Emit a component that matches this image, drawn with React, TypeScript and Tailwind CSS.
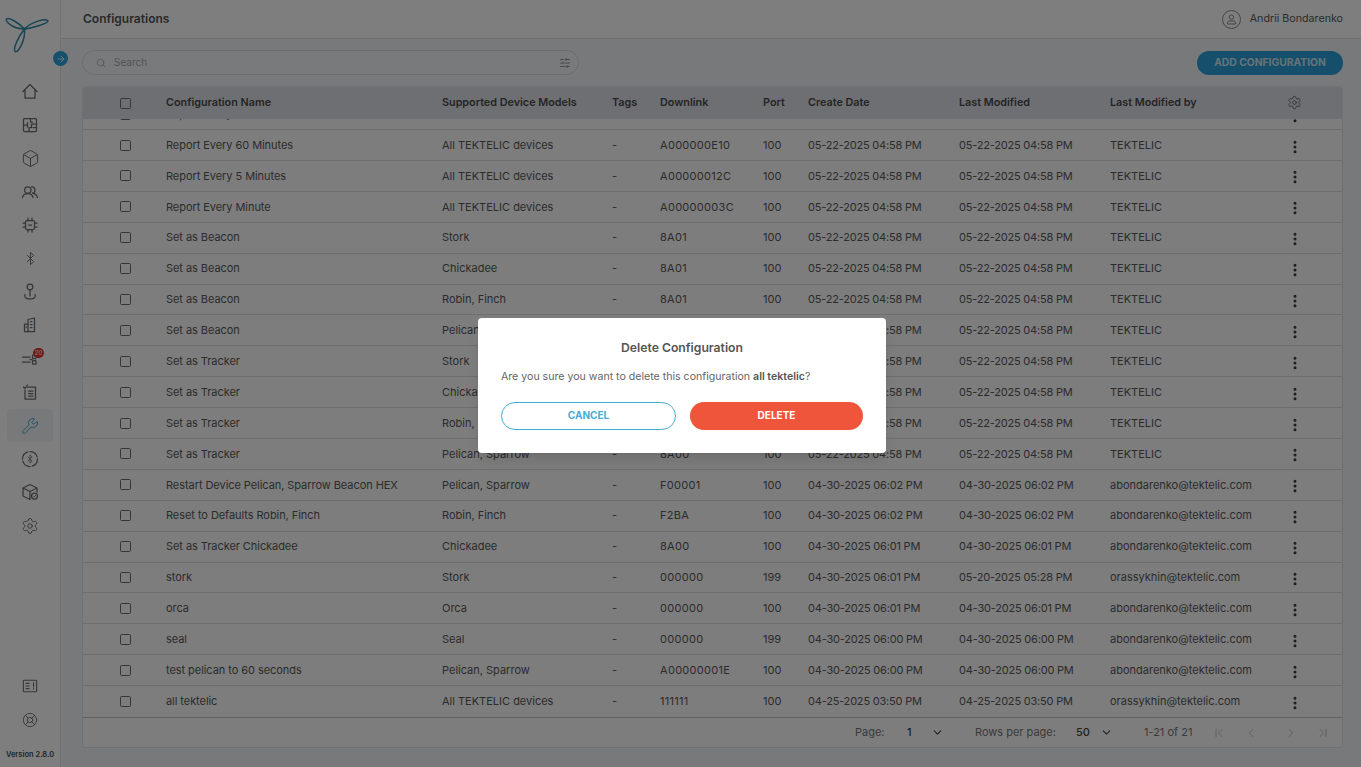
import React from "react";
import { Bluetooth, Box, ChevronDown, ChevronLeft, ChevronRight, ChevronFirst, ChevronLast, EllipsisVertical, LifeBuoy, Search, Settings, SlidersHorizontal, Wrench, ArrowRight } from "lucide-react";

const A = "All TEKTELIC devices";
const D1 = "05-22-2025 04:58 PM";
const T = "TEKTELIC";
const AB = "abondarenko@tektelic.com";
const OR = "orassykhin@tektelic.com";
const rows: string[][] = [
  ["Report Every 30 Minutes", A, "A000000708", "100", D1, D1, T],
  ["Report Every 60 Minutes", A, "A000000E10", "100", D1, D1, T],
  ["Report Every 5 Minutes", A, "A00000012C", "100", D1, D1, T],
  ["Report Every Minute", A, "A00000003C", "100", D1, D1, T],
  ["Set as Beacon", "Stork", "8A01", "100", D1, D1, T],
  ["Set as Beacon", "Chickadee", "8A01", "100", D1, D1, T],
  ["Set as Beacon", "Robin, Finch", "8A01", "100", D1, D1, T],
  ["Set as Beacon", "Pelican, Sparrow", "8A01", "100", D1, D1, T],
  ["Set as Tracker", "Stork", "8A00", "100", D1, D1, T],
  ["Set as Tracker", "Chickadee", "8A00", "100", D1, D1, T],
  ["Set as Tracker", "Robin, Finch", "8A00", "100", D1, D1, T],
  ["Set as Tracker", "Pelican, Sparrow", "8A00", "100", D1, D1, T],
  ["Restart Device Pelican, Sparrow Beacon HEX", "Pelican, Sparrow", "F00001", "100", "04-30-2025 06:02 PM", "04-30-2025 06:02 PM", AB],
  ["Reset to Defaults Robin, Finch", "Robin, Finch", "F2BA", "100", "04-30-2025 06:02 PM", "04-30-2025 06:02 PM", AB],
  ["Set as Tracker Chickadee", "Chickadee", "8A00", "100", "04-30-2025 06:01 PM", "04-30-2025 06:01 PM", AB],
  ["stork", "Stork", "000000", "199", "04-30-2025 06:01 PM", "05-20-2025 05:28 PM", OR],
  ["orca", "Orca", "000000", "100", "04-30-2025 06:01 PM", "04-30-2025 06:01 PM", AB],
  ["seal", "Seal", "000000", "199", "04-30-2025 06:00 PM", "04-30-2025 06:00 PM", AB],
  ["test pelican to 60 seconds", "Pelican, Sparrow", "A00000001E", "100", "04-30-2025 06:00 PM", "04-30-2025 06:00 PM", AB],
  ["all tektelic", A, "111111", "100", "04-25-2025 03:50 PM", "04-25-2025 03:50 PM", OR],
];

const grid = "grid grid-cols-[83px_276px_170px_48px_103px_45px_151px_151px_1fr] items-center";
const ic = { size: 18, strokeWidth: 1.25 };

function Ico({ size = 18, children }: { size?: number; children: React.ReactNode }) {
  return (
    <svg width={size} height={size} viewBox="0 0 18 18" fill="none" stroke="currentColor" strokeWidth="1.25" strokeLinejoin="round" strokeLinecap="round">
      {children}
    </svg>
  );
}
const HomeI = () => <Ico><path d="M2 8.500L9 1.500L16 8.500M4 7V15H14V7" /></Ico>;
const FloorPlan = () => <Ico><rect x="2.500" y="2.500" width="13" height="13" rx="1" /><path d="M2.500 9H6.500M6.500 6.500V11M9.500 2.500V6H11.500M15.500 8H10.500V11.500H8V15.500M12 11.500H15.500" /></Ico>;
const UsersI = () => <Ico><circle cx="6.800" cy="7" r="3.200" /><path d="M1.500 14.500C2 11.800 4 10.600 6.800 10.600S11.500 11.800 12 14.500" /><path d="M10.500 3.900A3.200 3.200 0 0 1 11.500 10.200C14 10.600 15.800 12 16.500 14.500" /></Ico>;
const Chip = () => <Ico><rect x="4.500" y="4.500" width="9" height="9" rx="1.500" /><path d="M7.500 9H10.500M7 2V4.500M11 2V4.500M7 13.500V16M11 13.500V16M2 7H4.500M2 11H4.500M13.500 7H16M13.500 11H16" /></Ico>;
const Pin = () => <Ico><circle cx="9" cy="4" r="2.800" /><path d="M9 6.800V13M4 11.500C2.600 14 5 16 9 16S15.400 14 14 11.500" /></Ico>;
const Tower = () => <Ico><path d="M7 15.500V3.500L13.500 2V15.500Z" /><path d="M7 8H3.500V15.500H7M9.500 5.500H11M9.500 8.500H11M9.500 11.500H11M5 11H5.500" /></Ico>;
const Doc = () => <Ico><path d="M6.500 4H14.500V16H4V7" /><path d="M2.500 4L4 5.500L6.500 2M7.500 8H12M7.500 10.500H12M7.500 13H12" /></Ico>;
function Rules() {
  return (
    <span className="relative flex h-[18px] w-[18px] items-center justify-center">
      <Ico><path d="M1.500 7H9M1.500 12H9M9 9.500H11" /><rect x="11.500" y="5" width="3.500" height="3.500" rx=".6" /><rect x="11.500" y="10.500" width="3.500" height="3.500" rx=".6" /></Ico>
      <span className="absolute -right-[5px] -top-[2px] flex h-[10px] w-[11px] items-center justify-center rounded-full bg-[#e3342f] text-[6px] leading-none text-white">20</span>
    </span>
  );
}
function BleCircle() {
  return (
    <span className="relative flex h-[18px] w-[18px] items-center justify-center">
      <span className="absolute inset-0">
        <Ico><circle cx="9" cy="9" r="7.500" strokeDasharray="9.500 2.200" /></Ico>
      </span>
      <Bluetooth size={10} strokeWidth={1.8} />
    </span>
  );
}
const BoxCheck = () => <Ico><path d="M9 1.500L16 5V9M9 1.500L2 5V13L9 16.500M2 5L9 8.500L16 5M9 8.500V16.500" /><circle cx="13.500" cy="13" r="3" /><path d="M12.300 13L13.200 13.900L14.800 12.300" strokeWidth=".9" /></Ico>;
const Panel = () => <Ico size={16}><rect x="1.500" y="2.500" width="15" height="13" rx="1" /><path d="M4.500 6H8M4.500 9H8M4.500 12H8M13 5.500V10M13 12V12.500" /></Ico>;

function Logo() {
  return (
    <svg width="44" height="38" viewBox="0 0 44 38" fill="none" stroke="#2f8aa3" strokeWidth="1.500" className="block">
      <path d="M19.500 13C14 7 4 1 1.500 3 -.5 6 10 13.500 19.500 13Z" />
      <path d="M19.500 13C27 12 42 8 43 5 42 2 27 5 19.500 13Z" />
      <path d="M19.500 13C13 21 8 33 10 35.500 13.500 37 20.500 24 19.500 13Z" />
    </svg>
  );
}

const navTop: [React.ReactNode, boolean?][] = [
  [<HomeI />], [<FloorPlan />], [<Box size={19} strokeWidth={1.25} />], [<UsersI />], [<Chip />],
  [<Bluetooth size={15} strokeWidth={1.5} />], [<Pin />], [<Tower />], [<Rules />],
  [<Doc />], [<Wrench {...ic} />, true], [<BleCircle />], [<BoxCheck />], [<Settings {...ic} />],
];

function Check() {
  return <span className="block h-[11px] w-[11px] rounded-[1.5px] border-[1.5px] border-[#6a6a6a]" />;
}

export default function App() {
  return (
    <div className="relative flex h-[767px] w-[1361px] overflow-hidden bg-[#eef2f5] font-[Inter,'Liberation_Sans',sans-serif] text-[11px] text-[#585858]">
      <aside className="relative flex w-[61px] shrink-0 flex-col items-stretch border-r border-[#dfe2e5] bg-[#fcfdfe]">
        <div className="ml-[5px] pt-[16px]"><Logo /></div>
        <div className="absolute right-[-8px] top-[51px] flex h-[15px] w-[15px] items-center justify-center rounded-full bg-[#2ba0da] text-white">
          <ArrowRight size={10} strokeWidth={2} />
        </div>
        <nav className="mt-[21px] flex flex-col text-[#686c70]">
          {navTop.map(([icon, active], i) => (
            <div key={i} className={`mx-[7px] flex h-[33.4px] items-center justify-center rounded-[4px] ${active ? "bg-[#f0f2f4] text-[#3f9fcb]" : ""}`}>
              {icon}
            </div>
          ))}
        </nav>
        <div className="mt-auto flex flex-col items-center text-[#686c70]">
          <div className="flex h-[34px] items-center"><Panel /></div>
          <div className="flex h-[34px] items-center"><LifeBuoy size={16} strokeWidth={1.3} /></div>
          <div className="mb-[7px] mt-[13px] text-[7.500px] font-semibold leading-[10px] text-[#4a4a4a]">Version 2.8.0</div>
        </div>
      </aside>

      <main className="flex min-w-0 flex-1 flex-col">
        <header className="flex h-[39px] shrink-0 items-center justify-between border-b border-[#dcdfe2] bg-[#fcfdfe] pl-[22px] pr-[18px]">
          <h1 className="text-[12px] font-semibold text-[#555]">Configurations</h1>
          <div className="flex items-center gap-[9px]">
            <svg width="19" height="19" viewBox="0 0 19 19" fill="none" stroke="#8a8a8a" strokeWidth="1">
              <circle cx="9.500" cy="9.500" r="9" />
              <circle cx="9.500" cy="7.200" r="2.200" />
              <path d="M5.500 14V12.800C5.500 11.600 6.500 11 7.500 11H11.500C12.500 11 13.500 11.600 13.500 12.800V14Z" />
            </svg>
            <span className="text-[10.700px]">Andrii Bondarenko</span>
          </div>
        </header>

        <div className="mt-[11px] flex items-center justify-between pl-[21px] pr-[18px]">
          <div className="flex h-[25px] w-[497px] items-center rounded-full border border-[#d5d9dd] bg-[#f3f5f7] pl-[13px] pr-[7px]">
            <Search size={10} strokeWidth={1.6} className="text-[#9a9a9a]" />
            <span className="ml-[8px] text-[10px] text-[#a9a9a9]">Search</span>
            <SlidersHorizontal size={12} strokeWidth={1.3} className="ml-auto text-[#666]" />
          </div>
          <button className="flex h-[24px] w-[146px] items-center justify-center rounded-full bg-[#2c9fd6] text-[10.300px] font-bold text-[#c9e6f3]">ADD CONFIGURATION</button>
        </div>

        <section className="mb-[19px] ml-[21px] mr-[18px] mt-[11px] flex min-h-0 flex-1 flex-col overflow-hidden rounded-[4px] border border-[#e0e3e6] bg-[#fafafa]">
          <div className={`${grid} h-[32px] shrink-0 bg-[#dddee6] text-[10.800px] font-semibold text-[#4a4a4a]`}>
            <div className="flex justify-center pl-[2px]"><Check /></div>
            <div>Configuration Name</div>
            <div>Supported Device Models</div>
            <div>Tags</div>
            <div>Downlink</div>
            <div>Port</div>
            <div>Create Date</div>
            <div>Last Modified</div>
            <div className="flex justify-between pr-[40px]"><span>Last Modified by</span><Settings size={15} strokeWidth={1.2} className="text-[#555]" /></div>
          </div>
          <div className="flex min-h-0 flex-1 flex-col justify-end overflow-hidden border-b border-[#c4c4c4]">
            {rows.map((r, i) => (
              <div key={i} className={`${grid} h-[30.9px] shrink-0 border-b border-[#dcdcdc] last:border-b-0`}>
                <div className="flex justify-center pl-[2px]"><Check /></div>
                <div className="whitespace-nowrap tracking-[-0.06px]">{r[0]}</div>
                <div>{r[1]}</div>
                <div>-</div>
                <div className="tracking-[0.3px]">{r[2]}</div>
                <div>{r[3]}</div>
                <div className="tracking-[-0.2px]">{r[4]}</div>
                <div className="tracking-[-0.2px]">{r[5]}</div>
                <div className="flex items-center justify-between pr-[39px]">
                  <span>{r[6]}</span>
                  <EllipsisVertical size={16} strokeWidth={2.5} className="mt-[3px] text-[#3c3c3c]" />
                </div>
              </div>
            ))}
          </div>
          <footer className="flex h-[29px] shrink-0 items-center justify-end pr-[9px] text-[#777]">
            <span className="w-[42px]">Page:</span>
            <div className="flex w-[58px] items-center justify-between pl-[10px] pr-[11px] font-medium text-[#444]"><span>1</span><ChevronDown size={13} strokeWidth={2} /></div>
            <span className="ml-[20px] w-[91px]">Rows per page:</span>
            <div className="flex w-[58px] items-center justify-between pl-[10px] pr-[11px] font-medium text-[#444]"><span>50</span><ChevronDown size={13} strokeWidth={2} /></div>
            <span className="ml-[20px] w-[65px]">1-21 of 21</span>
            <div className="flex items-center text-[#aaa]">
              <ChevronFirst size={14} strokeWidth={1.3} className="mx-[3px]" />
              <ChevronLeft size={14} strokeWidth={1.3} className="ml-[15px] mr-[3px]" />
              <ChevronRight size={14} strokeWidth={1.3} className="ml-[23px] mr-[3px]" />
              <ChevronLast size={14} strokeWidth={1.3} className="ml-[15px] mr-[3px]" />
            </div>
          </footer>
        </section>
      </main>

      <div className="absolute inset-0 flex items-center justify-center bg-black/50 pl-[3px] pt-[3px]">
        <div className="flex w-[408px] flex-col rounded-[4px] bg-white px-[23px] pb-[23px] pt-[22px] shadow-lg">
          <h2 className="text-center text-[12.200px] font-semibold leading-[16px] text-[#555]">Delete Configuration</h2>
          <p className="mt-[14px] whitespace-nowrap text-[10.600px] leading-[14px] text-[#666]">
            Are you sure you want to delete this configuration <span className="font-semibold text-[#555]">all tektelic</span>?
          </p>
          <div className="mt-[18px] flex gap-[14px]">
            <button className="h-[28px] flex-1 rounded-full border-[1.5px] border-[#45aed2] text-[10px] font-bold text-[#45aed2]">CANCEL</button>
            <button className="h-[28px] flex-1 rounded-full bg-[#ee553b] text-[10px] font-bold text-white">DELETE</button>
          </div>
        </div>
      </div>
    </div>
  );
}
